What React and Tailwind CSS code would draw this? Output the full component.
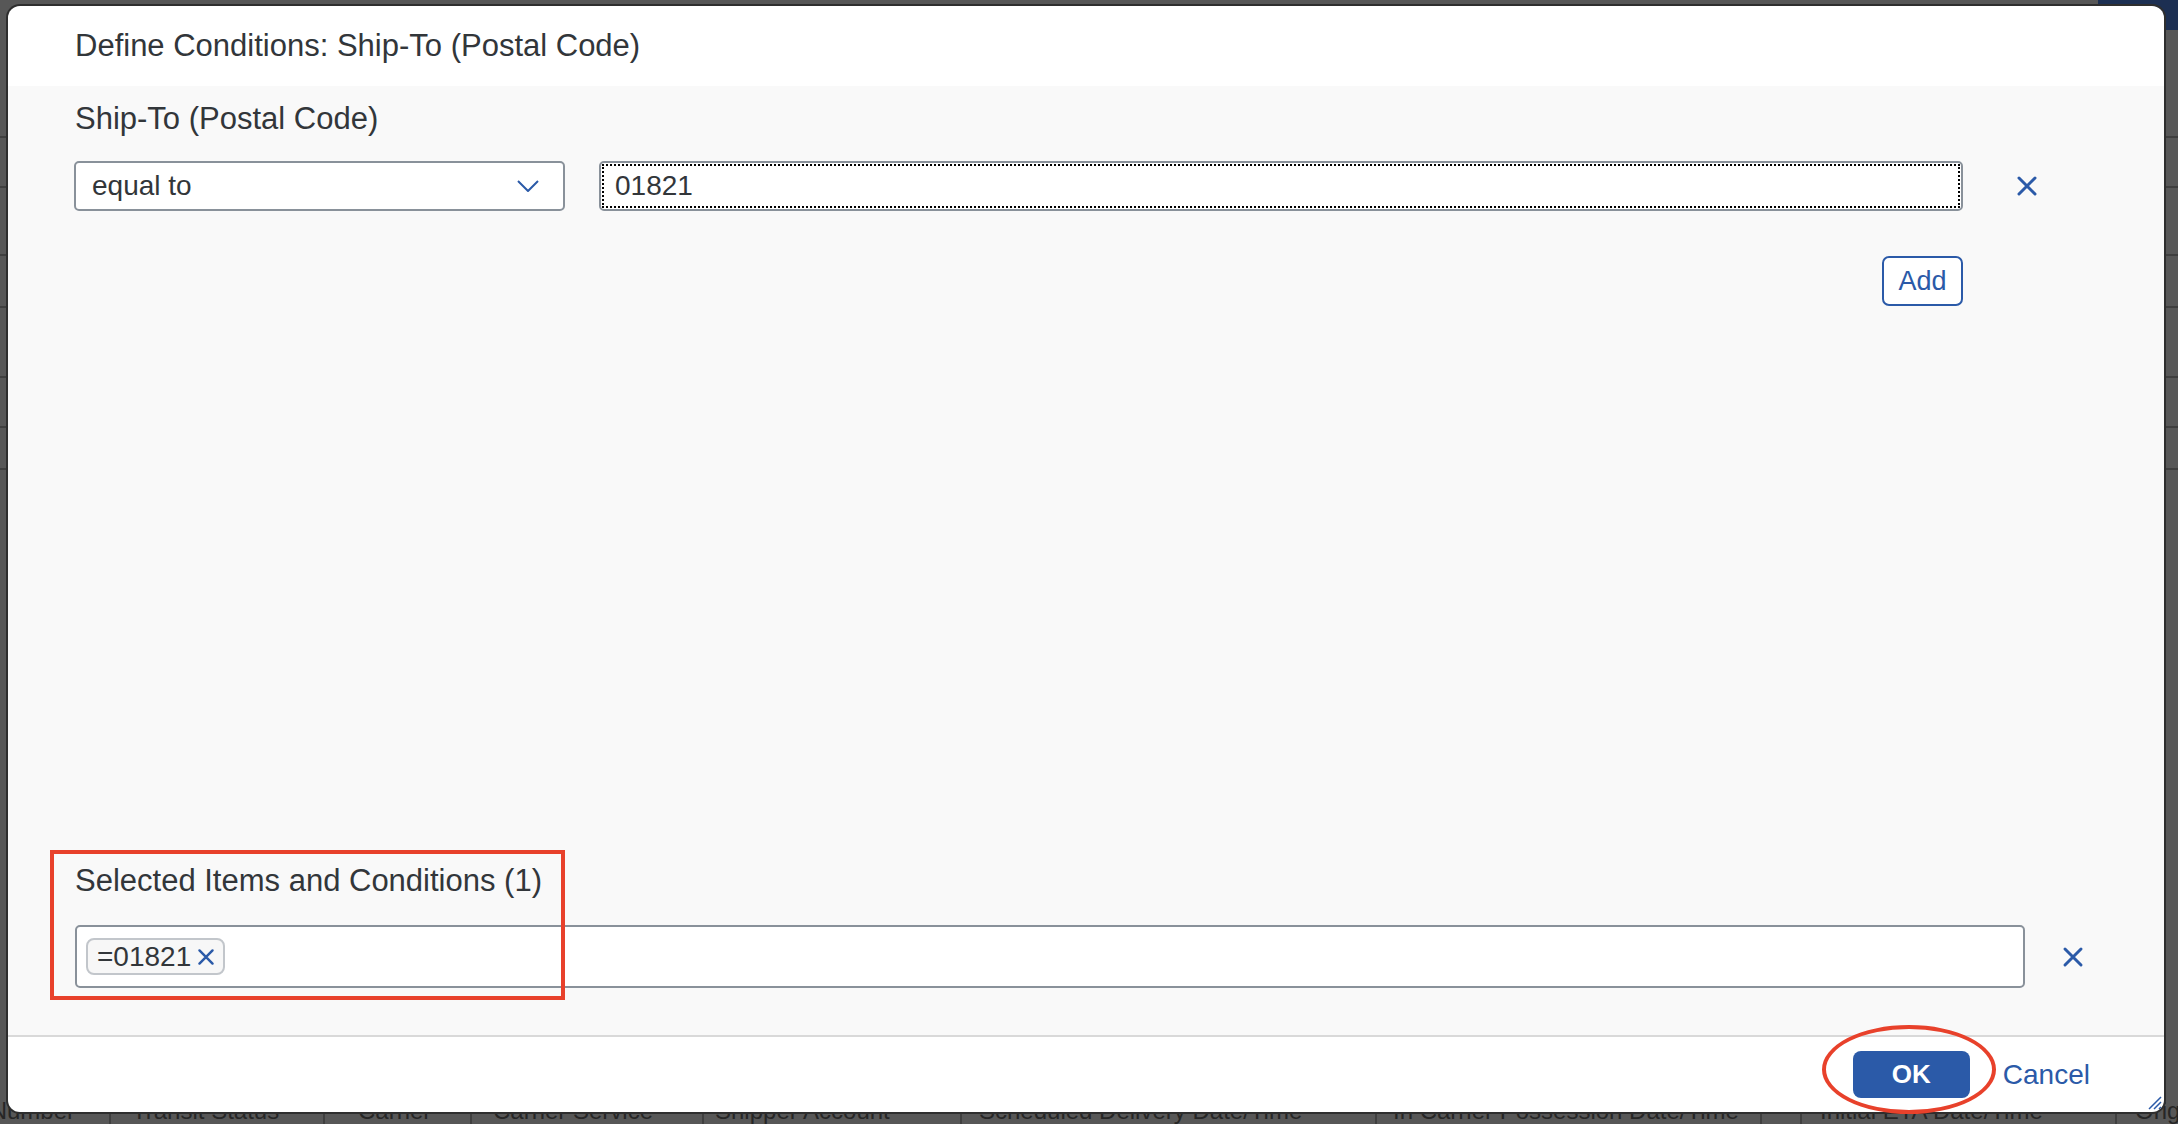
import React from "react";

const BLUE = "#2b5aa8";

const CloseIcon = ({ size = 22 }) => (
  <svg width={size} height={size} viewBox="0 0 22 22" fill="none">
    <path d="M3 3 L19 19 M19 3 L3 19" stroke={BLUE} strokeWidth="3" strokeLinecap="round" />
  </svg>
);

const Chevron = () => (
  <svg width="24" height="14" viewBox="0 0 24 14" fill="none">
    <path d="M2 2 L12 12 L22 2" stroke={BLUE} strokeWidth="2" strokeLinejoin="round" />
  </svg>
);

// table header cells of the page behind; [width, padding-left, label]
const headerCells = [
  [109, 0, "Number"],
  [214, 21, "Transit Status"],
  [147, 33, "Carrier"],
  [232, 21, "Carrier Service"],
  [258, 11, "Shipper Account"],
  [415, 17, "Scheduled Delivery Date/Time"],
  [385, 16, "In Carrier Possession Date/Time"],
  [40, 16, "-"],
  [315, 18, "Initial ETA Date/Time"],
  [63, 18, "Origin"],
];

// page behind the dimmed overlay; only slivers of it show around the dialog
const BackgroundPage = () => {
  const rows = [138, 50, 68, 52, 70, 50, 42];
  return (
    <div className="flex flex-col h-full">
      <div className="h-0 flex justify-end">
        <div className="w-[80px] h-[30px] bg-[#1c2f52]" />
      </div>
      {rows.map((h, i) => (
        <div key={i} className="border-b-2 border-[#3f3f3f]" style={{ height: h }} />
      ))}
      <div className="flex-1" />
      <div className="h-[36px] pt-[8px] flex text-[24px] leading-[30px] text-[#262626] whitespace-nowrap">
        {headerCells.map(([w, pl, label], i) => (
          <div
            key={label}
            className={`overflow-hidden shrink-0 ${i === 0 ? "flex justify-end pr-[34px]" : "border-l-2 border-[#3f3f3f]"}`}
            style={{ width: w, paddingLeft: pl }}
          >
            {label}
          </div>
        ))}
      </div>
    </div>
  );
};

export default function App() {
  return (
    <div
      className="relative w-[2178px] h-[1124px] overflow-hidden bg-[#575757]"
      style={{ fontFamily: '"Liberation Sans", Arial, sans-serif' }}
    >
      <BackgroundPage />

      {/* dialog */}
      <div className="absolute left-[8px] top-[6px] w-[2156px] h-[1106px] rounded-[12px] overflow-hidden flex flex-col shadow-[0_0_0_2px_#2e2e2e]">
        <div className="h-[80px] bg-white flex items-center pl-[67px] shrink-0">
          <h1 className="text-[31px] text-[#32363a] leading-[36px]">Define Conditions: Ship-To (Postal Code)</h1>
        </div>

        <div className="flex-1 bg-[#f9f9f9] flex flex-col pl-[66px]">
          <div className="pt-[15px] text-[31px] leading-[36px] text-[#32363a] pl-px">Ship-To (Postal Code)</div>

          <div className="mt-[24px] flex items-center">
            <div className="w-[491px] h-[50px] bg-white border-2 border-[#89919a] rounded-[5px] flex items-center justify-between pl-[16px] pr-[23px]">
              <span className="text-[28px] text-[#32363a]">equal to</span>
              <Chevron />
            </div>
            <div className="ml-[34px] w-[1364px] h-[50px] bg-white border-2 border-[#89919a] rounded-[5px] p-px">
              <div className="h-full border-2 border-dotted border-black flex items-center pl-[11px] text-[28px] text-[#32363a]">
                01821
              </div>
            </div>
            <div className="w-[128px] flex justify-center">
              <CloseIcon />
            </div>
          </div>

          <div className="mt-[45px] w-[1889px] flex justify-end">
            <button className="w-[81px] h-[50px] border-2 rounded-[7px] bg-white text-[27px] flex items-center justify-center" style={{ borderColor: BLUE, color: BLUE }}>
              Add
            </button>
          </div>

          <div className="flex-1" />

          <div className="text-[31px] leading-[36px] text-[#32363a] pl-px">Selected Items and Conditions (1)</div>
          <div className="mt-[26px] mb-[47px] flex items-center">
            <div className="ml-px w-[1950px] h-[63px] bg-white border-2 border-[#89919a] rounded-[5px] flex items-center pl-[9px]">
              <div className="h-[37px] bg-[#f7f7f7] border-2 border-[#c2c6cb] rounded-[8px] flex items-center pl-[9px] pr-[8px] gap-[6px]">
                <span className="text-[28px] text-[#32363a] leading-none">=01821</span>
                <CloseIcon size={18} />
              </div>
            </div>
            <div className="w-[96px] flex justify-center">
              <CloseIcon />
            </div>
          </div>
        </div>

        <div className="h-[77px] shrink-0 bg-white border-t-2 border-[#d9d9d9] flex items-center justify-end pr-[74px] gap-[33px] relative">
          <button className="w-[117px] h-[47px] rounded-[8px] text-white font-bold text-[26px] flex items-center justify-center" style={{ backgroundColor: BLUE }}>
            OK
          </button>
          <button className="text-[28px]" style={{ color: BLUE }}>Cancel</button>
          <svg className="absolute right-[2px] bottom-[2px]" width="16" height="16" viewBox="0 0 16 16">
            <path d="M15 3 L3 15 M15 8 L8 15 M15 13 L13 15" stroke={BLUE} strokeWidth="1.5" />
          </svg>
        </div>
      </div>

      {/* annotation marks */}
      <div className="absolute left-[50px] top-[850px] w-[515px] h-[150px] border-[4px] border-[#e8412b]" />
      <div className="absolute left-[1822px] top-[1025px] w-[174px] h-[89px] border-[4px] border-[#e8412b] rounded-[50%]" />
    </div>
  );
}
